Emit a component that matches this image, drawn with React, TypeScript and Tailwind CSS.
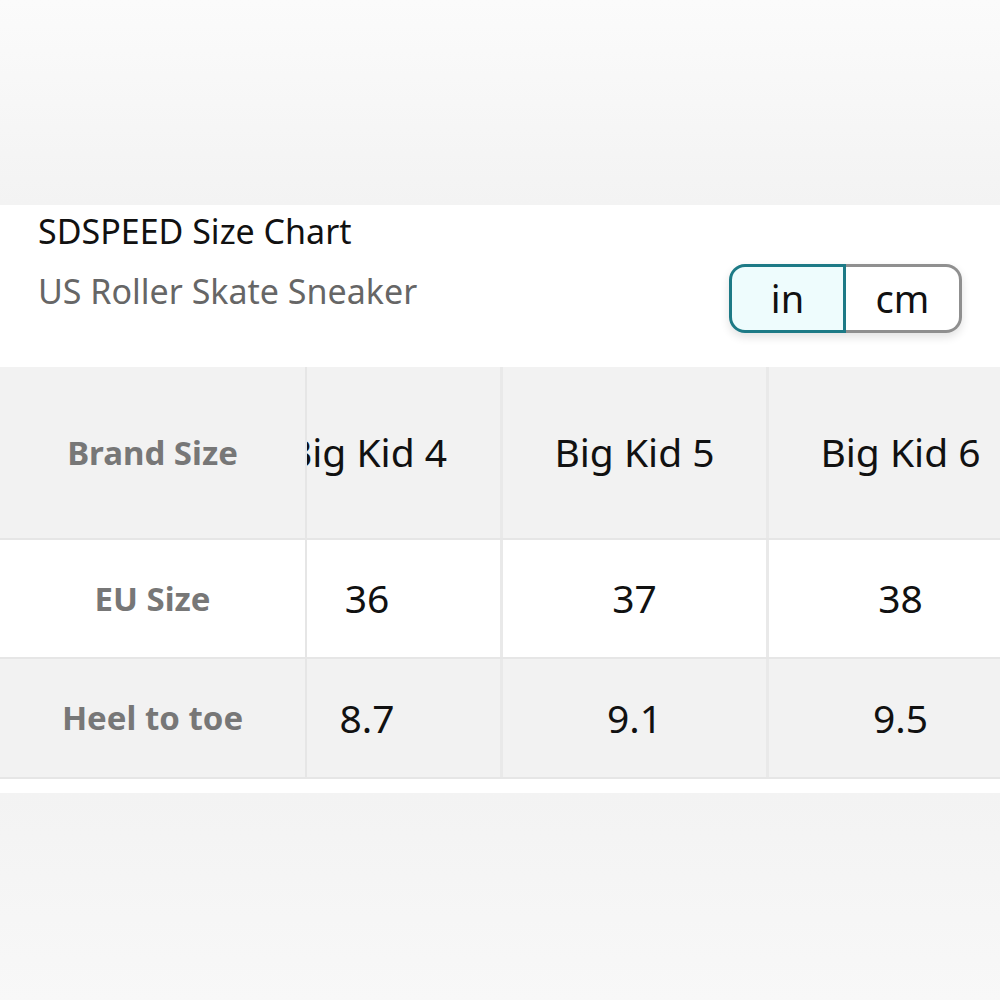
import React from "react";

const cols = [
  { size: "Big Kid 4", eu: "36", heel: "8.7" },
  { size: "Big Kid 5", eu: "37", heel: "9.1" },
  { size: "Big Kid 6", eu: "38", heel: "9.5" },
];

function Row({
  label,
  values,
  height,
  gray,
}: {
  label: string;
  values: string[];
  height: string;
  gray: boolean;
}) {
  return (
    <div
      className={`flex border-b-2 border-[#e6e6e6] ${height} ${gray ? "bg-[#f2f2f2]" : "bg-white"}`}
    >
      <div className="w-[307px] shrink-0 flex items-center justify-center border-r-2 border-[#e6e6e6] text-[33px] font-bold text-[#777777]">
        {label}
      </div>
      <div className="flex-1 overflow-hidden">
        <div className="flex h-full ml-[-73px]">
          {values.map((v, i) => (
            <div
              key={i}
              className={`w-[266px] shrink-0 flex items-center justify-center text-[39px] text-[#111111] whitespace-nowrap ${i > 0 ? "border-l-[3px] border-[#e9e9e9]" : ""}`}
            >
              {v}
            </div>
          ))}
        </div>
      </div>
    </div>
  );
}

export default function App() {
  return (
    <div
      className="w-[1000px] h-[1000px] flex flex-col overflow-hidden bg-white"
      style={{ fontFamily: '"Noto Sans", "Open Sans", sans-serif' }}
    >
      <div className="h-[205px] shrink-0 bg-gradient-to-b from-[#fbfbfb] to-[#f3f3f3]" />
      <div className="h-[162px] shrink-0 bg-white flex justify-between pl-[38px] pr-[38px]">
        <div className="flex flex-col pt-[4px] gap-[16px]">
          <div className="text-[34px] leading-[44px] text-[#111111]">SDSPEED Size Chart</div>
          <div className="text-[34px] leading-[44px] text-[#666666]">US Roller Skate Sneaker</div>
        </div>
        <div className="pt-[59px]">
          <div className="flex h-[69px] rounded-[16px] shadow-[0_4px_10px_rgba(0,0,0,0.12)]">
            <div className="w-[117px] flex items-center justify-center rounded-l-[16px] border-[3px] border-[#1d7a86] bg-[#eefcfd] text-[38px] text-[#111111]">
              in
            </div>
            <div className="w-[116px] flex items-center justify-center rounded-r-[16px] border-[3px] border-l-0 border-[#8f8f8f] bg-white text-[38px] text-[#111111]">
              cm
            </div>
          </div>
        </div>
      </div>
      <div className="shrink-0 bg-white pb-[14px]">
        <Row label="Brand Size" values={cols.map((c) => c.size)} height="h-[173px]" gray />
        <Row label="EU Size" values={cols.map((c) => c.eu)} height="h-[119px]" gray={false} />
        <Row label="Heel to toe" values={cols.map((c) => c.heel)} height="h-[120px]" gray />
      </div>
      <div className="flex-1 bg-gradient-to-b from-[#f3f3f3] to-[#f8f8f8]" />
    </div>
  );
}
